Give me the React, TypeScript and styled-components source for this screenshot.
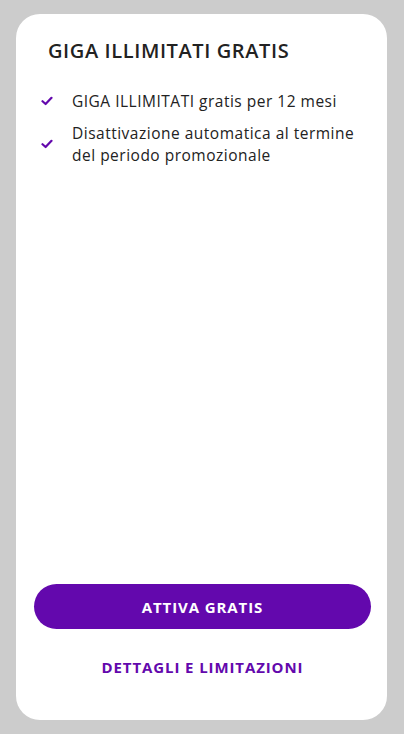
import React from 'react';
import styled, { createGlobalStyle } from 'styled-components';

const GlobalStyle = createGlobalStyle`
  html, body {
    margin: 0;
    padding: 0;
    background: #cccccc;
  }
  body {
    font-family: 'Open Sans', 'Liberation Sans', sans-serif;
  }
`;

const Page = styled.div`
  padding: 14px 17px 14px 16px;
  box-sizing: border-box;
  height: 734px;
  display: flex;
`;

const Card = styled.section`
  flex: 1;
  background: #ffffff;
  border-radius: 24px;
  display: flex;
  flex-direction: column;
  padding: 24px 16px 0 18px;
`;

const Title = styled.h1`
  margin: 0 0 0 14px;
  font-size: 20px;
  line-height: 26px;
  font-weight: 600;
  letter-spacing: 0.6px;
  color: #222222;
`;

const List = styled.ul`
  list-style: none;
  margin: 26px 0 0;
  padding: 0 10px 0 7px;
  display: flex;
  flex-direction: column;
  gap: 10px;
`;

const Item = styled.li`
  display: flex;
  align-items: center;
  gap: 19px;
  font-size: 15.5px;
  line-height: 22px;
  letter-spacing: 0.5px;
  color: #222222;
`;

const Check = styled.svg`
  flex: none;
  width: 12px;
  height: 10px;
`;

const Spacer = styled.div`
  flex: 1;
`;

const Button = styled.button`
  height: 45px;
  border: none;
  border-radius: 23px;
  background: #6308ad;
  color: #ffffff;
  font-family: inherit;
  font-weight: 700;
  font-size: 15px;
  letter-spacing: 0.9px;
  cursor: pointer;
`;

const Link = styled.a`
  margin: 30px 0 45px;
  text-align: center;
  color: #6308ad;
  font-weight: 700;
  font-size: 15px;
  line-height: 16px;
  letter-spacing: 0.9px;
  text-decoration: none;
`;

const CheckIcon = () => (
  <Check viewBox="0 0 12 10">
    <path d="M1.5 5.2 L4.6 8 L10.5 1.8" fill="none" stroke="#6308ad" strokeWidth="2.2" strokeLinecap="round" strokeLinejoin="round" />
  </Check>
);

const items = [
  'GIGA ILLIMITATI gratis per 12 mesi',
  'Disattivazione automatica al termine del periodo promozionale',
];

export default function App() {
  return (
    <>
      <GlobalStyle />
      <Page>
        <Card>
          <Title>GIGA ILLIMITATI GRATIS</Title>
          <List>
            {items.map(t => (
              <Item key={t}>
                <CheckIcon />
                <span>{t}</span>
              </Item>
            ))}
          </List>
          <Spacer />
          <Button>ATTIVA GRATIS</Button>
          <Link href="#">DETTAGLI E LIMITAZIONI</Link>
        </Card>
      </Page>
    </>
  );
}
